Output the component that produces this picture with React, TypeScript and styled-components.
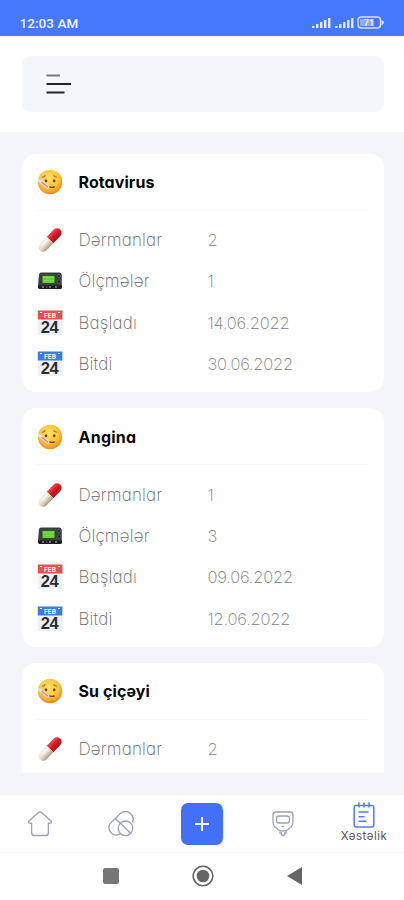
import React from "react";
import styled, { createGlobalStyle } from "styled-components";

const GlobalStyle = createGlobalStyle`
  * { box-sizing: border-box; }
  body { margin: 0; background: #fff; }
`;

const Screen = styled.div`
  width: 404px;
  height: 900px;
  display: flex;
  flex-direction: column;
  overflow: hidden;
  background: #fff;
  font-family: Inter, "Liberation Sans", sans-serif;
  font-feature-settings: "cv11";
`;

const StatusBar = styled.div`
  height: 35.5px;
  flex: none;
  display: flex;
  align-items: center;
  justify-content: space-between;
  padding: 11px 20px 0 19.5px;
  background: #4678ff;
  color: #eef3ff;
  font: 500 13.5px Roboto, sans-serif;
  letter-spacing: 0.05px;
`;

const Header = styled.header`
  height: 96.5px;
  flex: none;
  padding: 20.5px 20px 0 21.5px;
`;

const MenuBar = styled.div`
  height: 56px;
  padding: 17px 24px;
  border-radius: 9px;
  background: #f3f6fa;
`;

const Body = styled.main`
  height: 663px;
  flex: none;
  padding: 21.5px 20px 0 21.5px;
  background: #f3f5fa;
`;

const List = styled.div`
  height: 619.5px;
  overflow: hidden;
  display: flex;
  flex-direction: column;
  gap: 16px;
`;

const Card = styled.section`
  height: 238.5px;
  flex: none;
  padding: 0 16px 0 15px;
  border-radius: 14px;
  background: #fff;
`;

const CardHead = styled.div`
  height: 57px;
  display: flex;
  align-items: center;
  padding-top: 1px;
  border-bottom: 1px solid #f8f8fa;
`;

const Rows = styled.div`
  padding-top: 9px;
`;

const Row = styled.div`
  height: 41.3px;
  display: flex;
  align-items: center;
`;

const IconCell = styled.div`
  width: 42px;
  height: 26px;
  flex: none;
`;

const Title = styled.span<{ $tracking: number }>`
  white-space: nowrap;
  font-size: 16px;
  font-weight: 700;
  letter-spacing: ${(p) => p.$tracking}px;
  color: #080808;
`;

const Label = styled.span`
  width: 129px;
  font-size: 17px;
  font-weight: 200;
  letter-spacing: 0.15px;
  color: #666;
`;

const Value = styled.span`
  font-size: 16.5px;
  font-weight: 200;
  letter-spacing: -0.2px;
  color: #7c7c7c;
`;

const TabBar = styled.nav`
  height: 57px;
  flex: none;
  display: grid;
  grid-template-columns: repeat(5, 81px);
  justify-content: center;
  justify-items: center;
  align-items: center;
`;

const AddButton = styled.div`
  width: 42px;
  height: 42px;
  display: grid;
  place-items: center;
  border-radius: 7px;
  background: #4270fa;
`;

const ActiveTab = styled.div`
  display: flex;
  flex-direction: column;
  align-items: center;
  padding-bottom: 2px;
  font-size: 11.5px;
  line-height: 14px;
  letter-spacing: 0.5px;
  color: #555;
`;

const SystemBar = styled.div`
  height: 48px;
  flex: none;
  display: grid;
  grid-template-columns: repeat(3, 92px);
  justify-content: center;
  justify-items: center;
  align-items: center;
  padding: 0 0 2px 1px;
  border-top: 1px solid #f8f8f9;
`;

const StatusIcons = () => (
  <svg width="75" height="16" viewBox="0 0 75 16" fill="none">
    {[3, 26].map((x) => (
      <g key={x} fill="#e5ecff">
        <rect x={x} y="11" width="2.4" height="2" />
        <rect x={x + 4} y="9" width="2.4" height="4" />
        <rect x={x + 8} y="7" width="2.4" height="6" />
        <rect x={x + 12} y="5" width="2.4" height="8" />
        <rect x={x + 16} y="3" width="2.4" height="10" />
      </g>
    ))}
    <rect x="49" y="2" width="22.5" height="11" rx="3.2" stroke="#d5e0ff" strokeWidth="1.5" />
    <rect x="51" y="4" width="14" height="7" fill="#8babff" />
    <path d="M73 5.5 75 7.5 73 9.5Z" fill="#d5e0ff" stroke="#d5e0ff" />
    <text x="60" y="10.8" textAnchor="middle" fill="#fff" fontFamily="Roboto" fontSize="9" fontWeight="500">71</text>
  </svg>
);

const Face = () => (
  <svg width="26" height="26" viewBox="0 0 26 26" fill="none">
    <defs>
      <radialGradient id="face" cx="45%" cy="35%" r="65%">
        <stop stopColor="#ffe363" />
        <stop offset="0.6" stopColor="#fbc53b" />
        <stop offset="1" stopColor="#ef8b22" />
      </radialGradient>
    </defs>
    <circle cx="13" cy="13" r="12.2" fill="url(#face)" />
    <path d="M5 8.3c1.5-.1 2.7-.8 3.3-2M16.5 6.3c.8 1.3 2 1.9 3.5 2" stroke="#a3681d" strokeWidth="1.1" />
    <ellipse cx="9" cy="11.8" rx="1.3" ry="1.5" fill="#68431c" />
    <ellipse cx="17.2" cy="11.8" rx="1.3" ry="1.5" fill="#68431c" />
    <path d="M11 18.2c2-1.2 3.7 1.4 6.2-.3" stroke="#744011" strokeWidth="1.3" strokeLinecap="round" />
    <path d="m2.3 11.5 8.5 6.5" stroke="#dce4ec" strokeWidth="3" strokeLinecap="round" />
    <path d="m5 13.6 5.7 4.3" stroke="#db7d80" strokeWidth="1.2" strokeLinecap="round" />
  </svg>
);

const Pill = () => (
  <svg width="26" height="26" viewBox="0 0 26 26">
    <defs>
      <linearGradient id="red" x1="0" y1="0" x2="0" y2="1">
        <stop stopColor="#ed5260" />
        <stop offset="0.4" stopColor="#dc1e2a" />
        <stop offset="1" stopColor="#ac1018" />
      </linearGradient>
      <linearGradient id="cream" x1="0" y1="0" x2="0" y2="1">
        <stop stopColor="#f8eedd" />
        <stop offset="0.5" stopColor="#e9dec9" />
        <stop offset="1" stopColor="#a99980" />
      </linearGradient>
    </defs>
    <g transform="translate(13 13) rotate(-46)">
      <path d="M0-4.6H10a4.6 4.6 0 0 1 0 9.2H0Z" fill="url(#red)" />
      <path d="M0-4.6H-10a4.6 4.6 0 0 0 0 9.2H0Z" fill="url(#cream)" />
      <path d="M-9-2H-2" stroke="#fffdf5" strokeWidth="1.4" strokeLinecap="round" />
    </g>
  </svg>
);

const Pager = () => (
  <svg width="26" height="26" viewBox="0 0 26 26">
    <path d="M4 4.5h18.5q2.3 0 2.3 2.5v13.5H2.4q-1.8 0-1.5-2L2 6.5q.3-2 2-2Z" fill="#3b3e40" />
    <path d="M1 17.5h24V19q0 2-2 2H3q-2 0-2-2Z" fill="#191e20" />
    <rect x="5" y="7.3" width="13" height="8.2" rx="1" fill="#65cd38" stroke="#294b25" />
    <path d="M6 9.7h11M6 12.7h11" stroke="#83de4c" strokeWidth="1" />
    <circle cx="22" cy="8" r="1.5" fill="#1c2022" stroke="#74797b" strokeWidth=".6" />
    <circle cx="22" cy="13.5" r="1.7" fill="#1c2022" stroke="#74797b" strokeWidth=".6" />
    <path d="M5 19h2m5 0h2m4 0h2" stroke="#b9bcc0" />
    <path d="M9 19h1.5" stroke="#df4444" />
  </svg>
);

const Calendar = ({ color }: { color: string }) => (
  <svg width="26" height="26" viewBox="0 0 26 26">
    <rect x=".8" y=".5" width="24.6" height="24.5" fill="#eef1f4" />
    <path d="M.8.5h24.6v9H.8Z" fill={color} />
    <path d="M3 2.5h2m16 0h2" stroke="#fff" strokeWidth="1.2" />
    <text x="13" y="8" textAnchor="middle" fontFamily="Inter" fontWeight="600" fontSize="6.5" fill="#fff">FEB</text>
    <text x="12.8" y="23.3" textAnchor="middle" fontFamily="Liberation Sans" fontWeight="700" fontSize="16.5" textLength="18" fill="#292d32">24</text>
  </svg>
);

const HomeIcon = () => (
  <svg width="26" height="26" viewBox="0 0 26 26" fill="none" stroke="#9fa1b3" strokeWidth="1.35" strokeLinejoin="round">
    <path d="M11.4 1.5Q13 .4 14.6 1.5L24 10q1.5 2-1 2.2h-1.6v9.3q0 3-3 3H7.6q-3 0-3-3v-9.3H3Q.5 12 2 10Z" />
  </svg>
);

const PillsIcon = () => (
  <svg width="26" height="26" viewBox="0 0 26 26" fill="none" stroke="#9fa1b3" strokeWidth="1.35">
    <path d="M12.2 22.7C7 27-2.2 20.2 2 12.8L12.5 2.2c6.8-5 14.8 1.8 12.1 9.1" />
    <path d="m7.3 7.5 5.2 5" />
    <circle cx="17.5" cy="17.3" r="7.3" />
    <path d="m12.5 12.3 10 10" />
  </svg>
);

const MeterIcon = () => (
  <svg width="24" height="28" viewBox="0 0 24 28" fill="none" stroke="#9fa1ad" strokeWidth="1.3">
    <path d="M5 2h14q3 0 3 3v6c0 5-2 6-5.2 8.7q-1.8 1.3-4.8 1.3t-4.8-1.3C4 17 2 16 2 11V5q0-3 3-3Z" />
    <rect x="5.5" y="6" width="13" height="7" rx="2.6" />
    <path d="M10.5 16.5h3M9 21v2h1.3v1.5L12 26l1.7-1.5V23H15v-2" />
  </svg>
);

const NotesIcon = () => (
  <svg width="22" height="27" viewBox="0 0 22 27" fill="none" stroke="#557cf0" strokeWidth="1.5">
    <rect x="1.2" y="3.5" width="19.6" height="21.5" rx="2" />
    <path d="M6 1v4M11 1v4M16 1v4M6 10H15M6 14.7H11M6 19.3H13" strokeLinecap="round" />
  </svg>
);

const illnesses = [
  { name: "Rotavirus", tracking: 0.08, medicines: "2", measures: "1", start: "14.06.2022", end: "30.06.2022" },
  { name: "Angina", tracking: 0.25, medicines: "1", measures: "3", start: "09.06.2022", end: "12.06.2022" },
  { name: "Su çiçəyi", tracking: 0.1, medicines: "2" },
];

export default function App() {
  return (
    <>
      <GlobalStyle />
      <Screen>
        <StatusBar><span>12:03 AM</span><StatusIcons /></StatusBar>
        <Header>
          <MenuBar>
            <svg width="26" height="23" viewBox="0 0 26 23" fill="none" strokeWidth="2">
              <path d="M.5 2.5H14" stroke="#77797e" />
              <path d="M.5 11H25M.5 19.5H18.5" stroke="#242528" />
            </svg>
          </MenuBar>
        </Header>
        <Body>
          <List>
            {illnesses.map((item) => (
              <Card key={item.name}>
                <CardHead><IconCell><Face /></IconCell><Title $tracking={item.tracking}>{item.name}</Title></CardHead>
                <Rows>
                  <Row><IconCell><Pill /></IconCell><Label>Dərmanlar</Label><Value>{item.medicines}</Value></Row>
                  {item.start && (
                    <>
                      <Row><IconCell><Pager /></IconCell><Label>Ölçmələr</Label><Value>{item.measures}</Value></Row>
                      <Row><IconCell><Calendar color="#e94f4d" /></IconCell><Label>Başladı</Label><Value>{item.start}</Value></Row>
                      <Row><IconCell><Calendar color="#397edc" /></IconCell><Label>Bitdi</Label><Value>{item.end}</Value></Row>
                    </>
                  )}
                </Rows>
              </Card>
            ))}
          </List>
        </Body>
        <TabBar>
          <HomeIcon />
          <PillsIcon />
          <AddButton>
            <svg width="16" height="16" viewBox="0 0 16 16"><path d="M8 1v14M1 8h14" stroke="#fff" strokeWidth="2" /></svg>
          </AddButton>
          <MeterIcon />
          <ActiveTab><NotesIcon />Xəstəlik</ActiveTab>
        </TabBar>
        <SystemBar>
          <svg width="16" height="16"><rect width="16" height="16" rx="2" fill="#777" /></svg>
          <svg width="22" height="22" fill="none"><circle cx="11" cy="11" r="9.8" stroke="#666" strokeWidth="1.6" /><circle cx="11" cy="11" r="6.3" fill="#666" /></svg>
          <svg width="16" height="18"><path d="M15 0v18L0 9Z" fill="#666" /></svg>
        </SystemBar>
      </Screen>
    </>
  );
}
